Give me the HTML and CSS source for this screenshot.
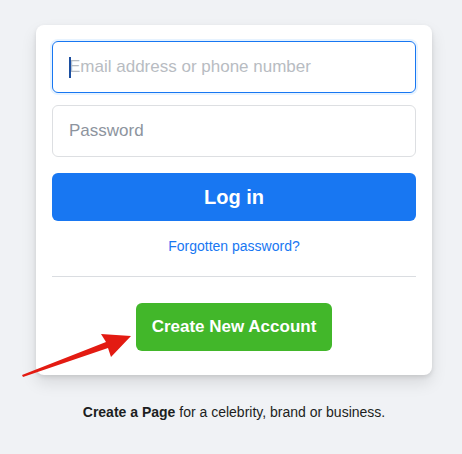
FILE: index.html
```html
<!DOCTYPE html>
<html>
<head>
<meta charset="utf-8">
<link rel="stylesheet" href="styles.css">
</head>
<body>
<div class="wrap">
  <div class="card">
    <div class="field focused"><span class="caret"></span><span class="ph light">Email address or phone number</span></div>
    <div class="field"><span class="ph">Password</span></div>
    <div class="login">Log in</div>
    <div class="forgot">Forgotten password?</div>
    <div class="divider"></div>
    <div class="create-row"><div class="create">Create New Account</div></div>
  </div>
  <p class="page-note"><b>Create a Page</b> for a celebrity, brand or business.</p>
</div>
<svg class="arrow" width="462" height="454" viewBox="0 0 462 454">
  <polygon points="22,375 106,342 101,334 131,336 111,357 108,348 23,377" fill="#e31b12"/>
</svg>
</body>
</html>
```
FILE: styles.css
```css
html, body {
  margin: 0;
  padding: 0;
}
body {
  background: #f0f2f5;
  font-family: "Liberation Sans", Arial, Helvetica, sans-serif;
  width: 462px;
  height: 454px;
  overflow: hidden;
  position: relative;
}
.wrap {
  width: 396px;
  margin-left: 36px;
  padding-top: 25px;
}
.card {
  background: #fff;
  border-radius: 8px;
  box-shadow: 0 2px 4px rgba(0,0,0,.1), 0 8px 16px rgba(0,0,0,.1);
  padding: 16px 16px 24px;
  box-sizing: border-box;
  display: flex;
  flex-direction: column;
}
.field {
  height: 52px;
  box-sizing: border-box;
  border: 1px solid #dddfe2;
  border-radius: 6px;
  padding: 0 16px;
  display: flex;
  align-items: center;
  font-size: 17px;
  position: relative;
}
.field + .field {
  margin-top: 12px;
}
.field.focused {
  border-color: #1877f2;
  box-shadow: 0 0 0 2px #e7f3ff;
}
.ph {
  color: #8d949e;
}
.ph.light {
  color: #b8bcc2;
}
.caret {
  position: absolute;
  left: 16px;
  top: 15px;
  width: 1.5px;
  height: 21px;
  background: #1c4fa0;
}
.login {
  margin-top: 16px;
  height: 48px;
  background: #1877f2;
  border-radius: 6px;
  color: #fff;
  font-size: 20px;
  font-weight: bold;
  display: flex;
  align-items: center;
  justify-content: center;
}
.forgot {
  margin-top: 16px;
  text-align: center;
  color: #1877f2;
  font-size: 14px;
  line-height: 19px;
}
.divider {
  margin-top: 20px;
  height: 1px;
  background: #dadde1;
}
.create-row {
  margin-top: 26px;
  display: flex;
  justify-content: center;
}
.create {
  height: 48px;
  padding: 0 16px;
  background: #42b72a;
  border-radius: 6px;
  color: #fff;
  font-size: 17px;
  font-weight: bold;
  display: flex;
  align-items: center;
  justify-content: center;
}
.page-note {
  margin: 28px 0 0;
  text-align: center;
  font-size: 14px;
  line-height: 18px;
  color: #1c1e21;
}
.page-note b {
  font-weight: bold;
}
.arrow {
  position: absolute;
  left: 0;
  top: 0;
  pointer-events: none;
}
```
